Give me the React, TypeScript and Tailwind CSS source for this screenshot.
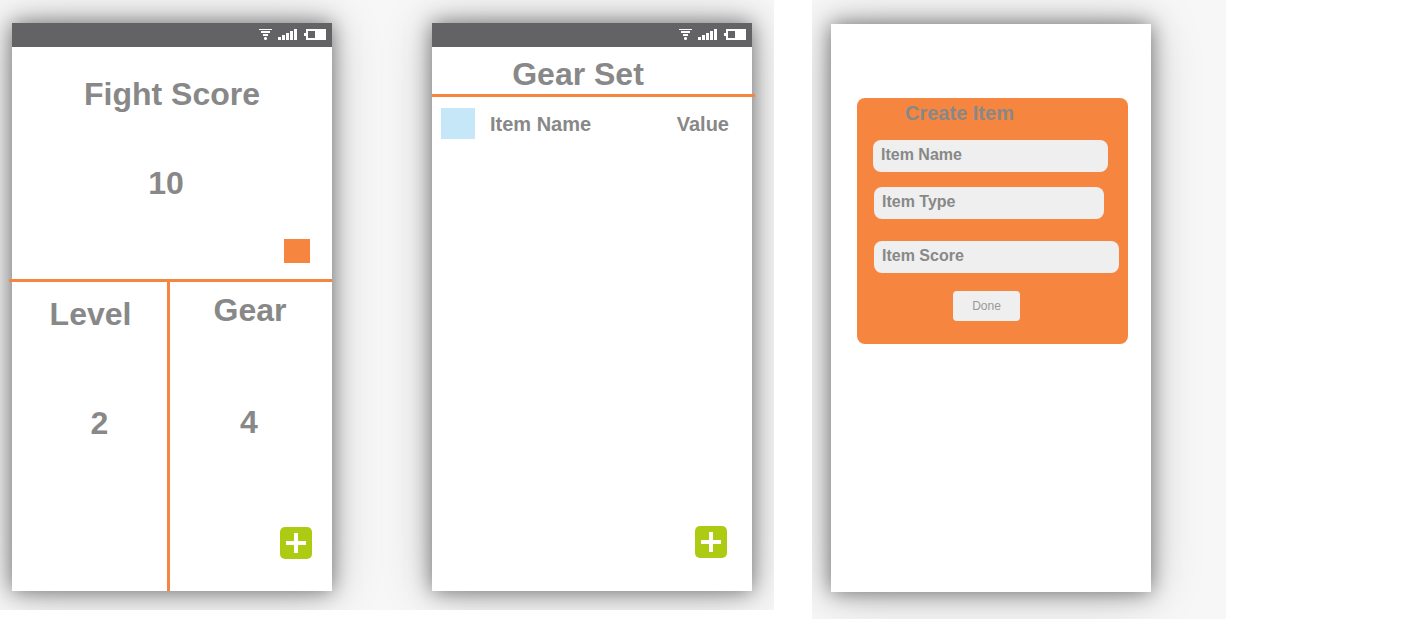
import type { ReactNode } from "react";

function StatusBar() {
  return (
    <header className="flex h-6 shrink-0 items-center justify-end bg-[#636365] pr-[6px]">
      <svg width="67" height="12" viewBox="0 0 67 12" fill="#ffffff" shapeRendering="crispEdges" aria-hidden="true">
        <path d="M0 0h13v1H0zM2 2h9v2H2zM4 5h5v2H4z" />
        <path d="M6 8h1v3H6zM5 9h3v1H5z" />
        <path d="M5 8h1v1H5zM7 8h1v1H7zM5 10h1v1H5zM7 10h1v1H7z" opacity="0.6" />
        <path d="M19 8h3v3h-3zM23 6h3v5h-3zM27 4h3v7h-3zM31 2h3v9h-3zM35 0h3v11h-3z" />
        <path fillRule="evenodd" d="M47 0h20v11H47V7h-2V4h2zM49 2v7h7V2z" />
      </svg>
    </header>
  );
}

function Phone({ children }: { children: ReactNode }) {
  return (
    <section className="flex h-[568px] w-80 shrink-0 flex-col bg-white shadow-[0_0_20px_rgba(0,0,0,0.5),0_2px_50px_rgba(0,0,0,0.2)]">
      {children}
    </section>
  );
}

function AddButton() {
  return (
    <button type="button" aria-label="Add item" className="block size-8 rounded-[5px] bg-[#aecb13]">
      <svg viewBox="0 0 32 32" className="size-8" fill="#ffffff" shapeRendering="crispEdges" aria-hidden="true">
        <path d="M14 6h4v8h8v4h-8v8h-4v-8H6v-4h8z" />
      </svg>
    </button>
  );
}

function ScoreScreen() {
  return (
    <Phone>
      <StatusBar />
      <div className="flex flex-col pt-[27px] pb-4 text-center text-[32px] leading-10 font-bold">
        <h1>Fight Score</h1>
        <p className="mt-[49px] pr-3">10</p>
        <button type="button" aria-label="Fight options" className="mt-9 mr-[22px] h-6 w-[26px] self-end bg-[#f6863f]" />
      </div>
      <div className="-ml-[3px] h-[3px] bg-[#f6863f]" />
      <div className="flex grow text-center text-[32px] leading-10 font-bold">
        <div className="w-[155px] pt-3">
          <h2 className="pl-0.5">Level</h2>
          <p className="mt-[69px] pl-5">2</p>
        </div>
        <div className="flex grow flex-col border-l-[3px] border-[#f6863f] pt-2 pb-8">
          <h2 className="pr-0.5">Gear</h2>
          <p className="mt-[72px] pr-1">4</p>
          <div className="mt-auto mr-5 self-end">
            <AddButton />
          </div>
        </div>
      </div>
    </Phone>
  );
}

function GearScreen() {
  return (
    <Phone>
      <StatusBar />
      <h1 className="pt-[7px] pr-7 text-center text-[32px] leading-10 font-bold">Gear Set</h1>
      <div className="-mr-[3px] h-[3px] shrink-0 bg-[#f6863f]" />
      <ul className="pt-[11px] pr-[23px] pl-[9px] text-xl leading-6 font-bold">
        <li className="flex items-center">
          <span className="h-[31px] w-[34px] bg-[#c5e7f8]" />
          <span className="ml-[15px]">Item Name</span>
          <span className="ml-auto">Value</span>
        </li>
      </ul>
      <div className="mt-auto mr-[25px] mb-[33px] self-end">
        <AddButton />
      </div>
    </Phone>
  );
}

const fieldClass =
  "block h-8 rounded-lg bg-[#efefef] px-2 pb-0.5 text-base font-bold text-[#888888] outline-none placeholder:text-[#888888] placeholder:opacity-100";

function CreateScreen() {
  return (
    <Phone>
      <form className="mt-[74px] mr-[23px] ml-[26px] flex flex-col rounded-lg bg-[#f6863f] pt-[3px] pb-[23px]">
        <h1 className="pl-12 text-xl leading-6 font-bold">Create Item</h1>
        <input className={`mt-[15px] mr-5 ml-4 ${fieldClass}`} aria-label="Item Name" placeholder="Item Name" />
        <input className={`mt-[15px] mr-6 ml-[17px] ${fieldClass}`} aria-label="Item Type" placeholder="Item Type" />
        <input className={`mt-[22px] mr-[9px] ml-[17px] ${fieldClass}`} aria-label="Item Score" placeholder="Item Score" />
        <button
          type="button"
          className="mt-[18px] ml-24 h-[30px] w-[67px] self-start rounded bg-[#efefef] text-xs text-[#999999]"
        >
          Done
        </button>
      </form>
    </Phone>
  );
}

export default function App() {
  return (
    <main className="flex min-h-screen items-start gap-[38px] bg-white font-['Liberation_Sans',Arial,sans-serif] text-[#888888]">
      <div className="flex shrink-0 gap-[100px] overflow-hidden bg-[#f7f7f7] pt-[23px] pr-[22px] pb-[19px] pl-3">
        <ScoreScreen />
        <GearScreen />
      </div>
      <div className="shrink-0 overflow-hidden bg-[#f7f7f7] pt-6 pr-[75px] pb-[27px] pl-[19px]">
        <CreateScreen />
      </div>
    </main>
  );
}
